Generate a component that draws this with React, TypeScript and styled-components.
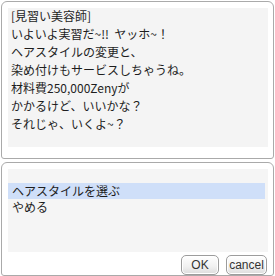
import React from 'react';
import styled, { createGlobalStyle } from 'styled-components';

const GlobalStyle = createGlobalStyle`
  html, body {
    margin: 0;
    padding: 0;
    background: #ffffff;
  }
  body {
    font-family: 'Noto Sans CJK JP', 'DejaVu Sans', sans-serif;
    font-size: 12px;
    color: #1e1e1e;
  }
`;

const Screen = styled.div`
  width: 275px;
  height: 276px;
  display: flex;
  flex-direction: column;
  gap: 3px;
  padding: 1px 1px 0 1px;
  box-sizing: border-box;
  overflow: hidden;
`;

const Window = styled.div<{ $height: number }>`
  height: ${(p) => p.$height}px;
  box-sizing: border-box;
  border: 1px solid #aaaaaa;
  border-radius: 6px 6px 3px 3px;
  background: #ffffff;
  padding: 6px 5px 0 6px;
  display: flex;
  flex-direction: column;
`;

const MessageBox = styled.div`
  height: 139px;
  background: #f4f4f4;
  padding: 0 0 0 3px;
  line-height: 18px;
  white-space: pre;
`;

const Line = styled.div`
  height: 18px;
  margin-top: -1px;
  margin-bottom: 1px;
`;

const List = styled.div`
  height: 83px;
  background: #f5f5f5;
  padding-top: 14px;
  box-sizing: border-box;
  padding-right: 3px;
`;

const Item = styled.div<{ $selected?: boolean }>`
  height: 16px;
  line-height: 16px;
  padding-left: 4px;
  overflow: hidden;
  background: ${(p) => (p.$selected ? '#cfdff9' : 'transparent')};
`;

const ButtonRow = styled.div`
  display: flex;
  justify-content: flex-end;
  gap: 7px;
  padding: 3px 1px 0 0;
`;

const Button = styled.button<{ $w: number }>`
  width: ${(p) => p.$w}px;
  height: 20px;
  padding: 0;
  border: 1px solid #9c9c9c;
  border-radius: 5px;
  background: linear-gradient(#ffffff, #f0f0f0 60%, #dcdcdc);
  box-shadow: inset 0 0 0 1px #ffffff;
  font-family: 'Liberation Sans', Arial, sans-serif;
  font-size: 12px;
  color: #333;
  line-height: 18px;
`;

const lines = [
  '[見習い美容師]',
  'いよいよ実習だ~!!  ヤッホ~！',
  'ヘアスタイルの変更と、',
  '染め付けもサービスしちゃうね。',
  '材料費250,000Zenyが',
  'かかるけど、いいかな？',
  'それじゃ、いくよ~？',
];

export default function App() {
  return (
    <>
      <GlobalStyle />
      <Screen>
        <Window $height={158}>
          <MessageBox>
            {lines.map((l, i) => (
              <Line key={i}>{l}</Line>
            ))}
          </MessageBox>
        </Window>
        <Window $height={114}>
          <List>
            <Item $selected>ヘアスタイルを選ぶ</Item>
            <Item>やめる</Item>
          </List>
          <ButtonRow>
            <Button $w={38}>OK</Button>
            <Button $w={41}>cancel</Button>
          </ButtonRow>
        </Window>
      </Screen>
    </>
  );
}
